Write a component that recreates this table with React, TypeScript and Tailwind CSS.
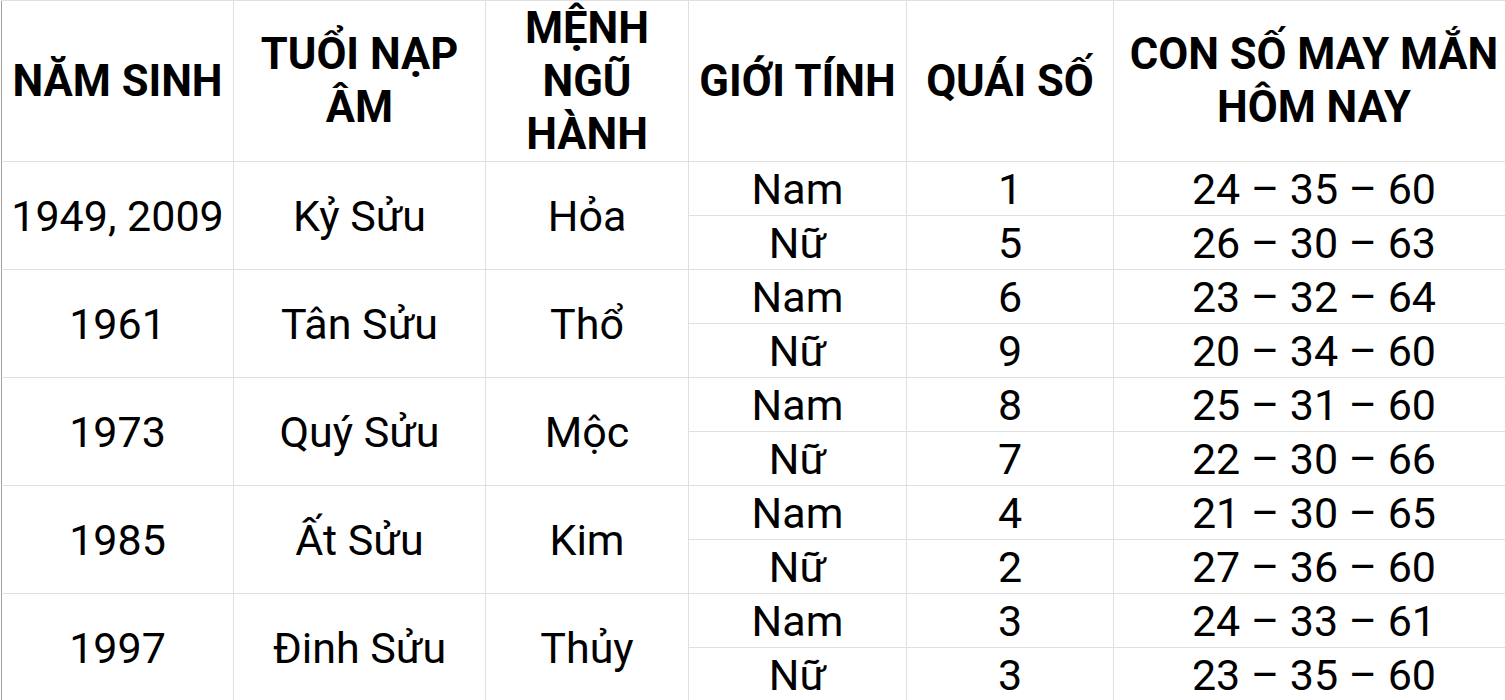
const headers = ["NĂM SINH", "TUỔI NẠP ÂM", "MỆNH NGŨ HÀNH", "GIỚI TÍNH", "QUÁI SỐ", "CON SỐ MAY MẮN HÔM NAY"];

const groups = [
  {
    year: "1949, 2009",
    tuoi: "Kỷ Sửu",
    menh: "Hỏa",
    rows: [
      ["Nam", "1", "24 – 35 – 60"],
      ["Nữ", "5", "26 – 30 – 63"],
    ],
  },
  {
    year: "1961",
    tuoi: "Tân Sửu",
    menh: "Thổ",
    rows: [
      ["Nam", "6", "23 – 32 – 64"],
      ["Nữ", "9", "20 – 34 – 60"],
    ],
  },
  {
    year: "1973",
    tuoi: "Quý Sửu",
    menh: "Mộc",
    rows: [
      ["Nam", "8", "25 – 31 – 60"],
      ["Nữ", "7", "22 – 30 – 66"],
    ],
  },
  {
    year: "1985",
    tuoi: "Ất Sửu",
    menh: "Kim",
    rows: [
      ["Nam", "4", "21 – 30 – 65"],
      ["Nữ", "2", "27 – 36 – 60"],
    ],
  },
  {
    year: "1997",
    tuoi: "Đinh Sửu",
    menh: "Thủy",
    rows: [
      ["Nam", "3", "24 – 33 – 61"],
      ["Nữ", "3", "23 – 35 – 60"],
    ],
  },
];

const cell = "flex items-center justify-center text-center border-r border-b border-[#e0e0e0]";
const data = `${cell} text-[43px] pt-0.5 whitespace-nowrap`;

export default function App() {
  return (
    <div
      className="w-[1505px] h-[700px] overflow-hidden bg-white text-black pl-px"
      style={{ fontFamily: "Roboto, 'Noto Sans', sans-serif" }}
    >
      <div className="grid w-[1514px] grid-cols-[233px_252px_203px_218px_207px_401px] grid-rows-[161px] auto-rows-[54px] border-t border-[#e0e0e0]">
        {headers.map((h, i) => (
          <div
            key={h}
            className={`${cell} px-1 text-[43.5px] font-bold leading-[53px] ${i === 0 ? "border-l border-l-[#a0a0a0]" : ""}`}
          >
            {h}
          </div>
        ))}
        {groups.map((g) => (
          <div key={g.year} className="contents">
            <div className={`${data} row-span-2 border-l border-l-[#a0a0a0]`}>{g.year}</div>
            <div className={`${data} row-span-2`}>{g.tuoi}</div>
            <div className={`${data} row-span-2`}>{g.menh}</div>
            {g.rows.map((r, ri) => (
              <div key={ri} className="contents">
                <div className={`${data} col-start-4`}>{r[0]}</div>
                <div className={data}>{r[1]}</div>
                <div className={data}>{r[2]}</div>
              </div>
            ))}
          </div>
        ))}
      </div>
    </div>
  );
}
